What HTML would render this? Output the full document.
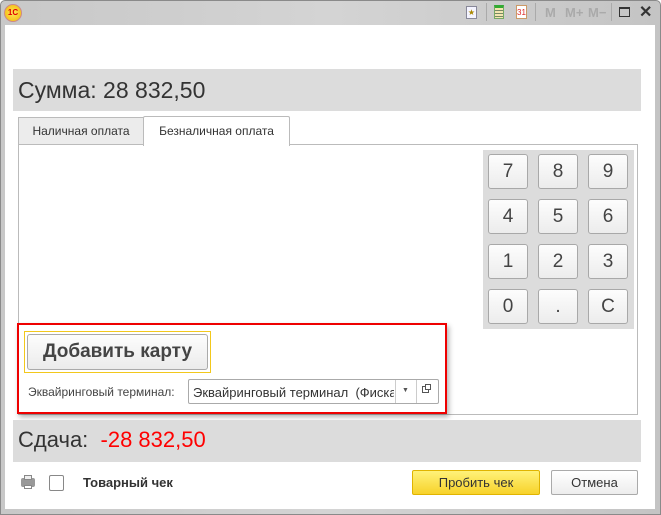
<!DOCTYPE html>
<html><head><meta charset="utf-8"><style>
*{box-sizing:border-box;margin:0;padding:0}
body{width:661px;height:515px;overflow:hidden;background:#fff;font-family:"Liberation Sans",sans-serif;position:relative}
.a{position:absolute}
.win{left:0;top:0;width:661px;height:515px;border:1px solid #8a8a8a;border-radius:5px 5px 0 0;background:linear-gradient(90deg,#c8c8c8,#d4d4d4 50%,#c4c4c4);}
.inner{left:5px;top:25px;width:650px;height:484px;background:#fff}
.k{width:40px;height:35px;border:1px solid #a8a8a8;border-radius:3px;background:linear-gradient(#fdfdfd,#ececec);font-size:19px;color:#444;text-align:center;line-height:33px}
.tb{color:#aaa;font-weight:bold;font-size:13px;top:5px}
</style></head><body>
<div class="a win"></div>
<div class="a inner"></div>
<div class="a" style="left:4px;top:4px;width:18px;height:18px;border-radius:50%;background:radial-gradient(#ffe45c,#f2b800);border:1px solid #c88;font-size:8px;color:#d00;font-weight:bold;text-align:center;line-height:16px">1С</div>
<div class="a" style="left:466px;top:6px;width:11px;height:13px;background:#f4f4ff;border:1px solid #889;font-size:8px;color:#a80;text-align:center;line-height:11px">★</div>
<div class="a" style="left:486px;top:3px;width:1px;height:18px;background:#aaa"></div>
<div class="a" style="left:494px;top:5px;width:10px;height:14px;background:repeating-linear-gradient(#f3e6b0 0 2px,#786 2px 3px);border:1px solid #7a6;border-top:3px solid #3a3"></div>
<div class="a" style="left:516px;top:5px;width:11px;height:14px;background:#fff;border:1px solid #c96;font-size:8px;color:#d22;text-align:center;line-height:14px">31</div>
<div class="a" style="left:535px;top:3px;width:1px;height:18px;background:#aaa"></div>
<div class="a tb" style="left:545px">M</div><div class="a tb" style="left:565px">M+</div><div class="a tb" style="left:588px">M−</div>
<div class="a" style="left:611px;top:3px;width:1px;height:18px;background:#aaa"></div>
<div class="a" style="left:619px;top:7px;width:11px;height:10px;border:1px solid #333;border-top-width:2px"></div>
<div class="a" style="left:639px;top:2px;font-size:16px;color:#333;font-weight:bold">✕</div>

<div class="a" style="left:13px;top:69px;width:628px;height:42px;background:#dcdcdc;font-size:23px;color:#333;padding:8px 0 0 5px">Сумма: 28 832,50</div>

<div class="a" style="left:18px;top:117px;width:126px;height:28px;background:#ececec;border:1px solid #bbb;font-size:12px;color:#333;text-align:center;line-height:26px">Наличная оплата</div>
<div class="a" style="left:18px;top:144px;width:620px;height:271px;border:1px solid #bbb"></div>
<div class="a" style="left:143px;top:116px;width:147px;height:30px;background:#fff;border:1px solid #bbb;border-bottom:none;border-radius:2px 2px 0 0;font-size:12px;color:#333;text-align:center;line-height:28px">Безналичная оплата</div>

<div class="a" style="left:483px;top:150px;width:151px;height:179px;background:#dcdcdc"></div>
<div class="a k" style="left:488px;top:154px">7</div><div class="a k" style="left:538px;top:154px">8</div><div class="a k" style="left:588px;top:154px">9</div>
<div class="a k" style="left:488px;top:199px">4</div><div class="a k" style="left:538px;top:199px">5</div><div class="a k" style="left:588px;top:199px">6</div>
<div class="a k" style="left:488px;top:244px">1</div><div class="a k" style="left:538px;top:244px">2</div><div class="a k" style="left:588px;top:244px">3</div>
<div class="a k" style="left:488px;top:289px">0</div><div class="a k" style="left:538px;top:289px">.</div><div class="a k" style="left:588px;top:289px">C</div>

<div class="a" style="left:17px;top:323px;width:430px;height:91px;border:2px solid #e00;box-shadow:2px 3px 5px rgba(0,0,0,.3)"></div>
<div class="a" style="left:24px;top:331px;width:187px;height:42px;border:1px solid #f2c81c"></div>
<div class="a" style="left:27px;top:334px;width:181px;height:36px;border:1px solid #aaa;border-radius:3px;background:linear-gradient(#fdfdfd,#ebebeb);font-size:19px;font-weight:bold;color:#444;text-align:center;line-height:34px">Добавить карту</div>
<div class="a" style="left:28px;top:385px;font-size:12px;color:#444">Эквайринговый терминал:</div>
<div class="a" style="left:188px;top:379px;width:251px;height:25px;border:1px solid #aaa;border-radius:2px;overflow:hidden;font-size:13px;color:#333;padding:5px 0 0 4px;white-space:nowrap"><span style="display:inline-block;width:201px;overflow:hidden">Эквайринговый терминал&nbsp; (Фискальный)</span></div>
<div class="a" style="left:395px;top:380px;width:1px;height:23px;background:#ccc"></div>
<div class="a" style="left:402px;top:387px;font-size:7px;color:#555">▼</div>
<div class="a" style="left:416px;top:380px;width:1px;height:23px;background:#ccc"></div>
<div class="a" style="left:422px;top:386px;width:7px;height:7px;border:1px solid #555;background:#fff"></div>
<div class="a" style="left:425px;top:384px;width:6px;height:6px;border:1px solid #555;background:#fff"></div>

<div class="a" style="left:13px;top:420px;width:628px;height:42px;background:#dcdcdc;font-size:22px;color:#333;padding:7px 0 0 5px">Сдача:&nbsp; <span style="color:#f00">-28 832,50</span></div>

<div class="a" style="left:21px;top:478px;width:14px;height:9px;background:#999;border-radius:2px"></div>
<div class="a" style="left:24px;top:475px;width:8px;height:5px;background:#eee;border:1px solid #888"></div>
<div class="a" style="left:24px;top:485px;width:8px;height:4px;background:#fff;border:1px solid #888"></div>
<div class="a" style="left:49px;top:475px;width:15px;height:16px;border:1px solid #888;background:#fff;border-radius:2px"></div>
<div class="a" style="left:83px;top:475px;font-size:13px;font-weight:bold;color:#333">Товарный чек</div>
<div class="a" style="left:412px;top:470px;width:128px;height:25px;border:1px solid #e0b400;border-radius:2px;background:linear-gradient(#fff27a,#f7d22a);font-size:13px;color:#333;text-align:center;line-height:23px">Пробить чек</div>
<div class="a" style="left:551px;top:470px;width:87px;height:25px;border:1px solid #aaa;border-radius:2px;background:linear-gradient(#fff,#ededed);font-size:13px;color:#333;text-align:center;line-height:23px">Отмена</div>
</body></html>
